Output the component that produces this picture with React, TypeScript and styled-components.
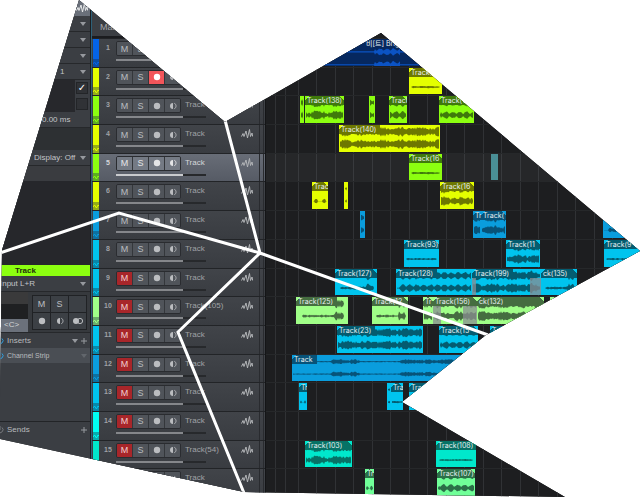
import React from "react";
import styled, { createGlobalStyle, css } from "styled-components";

const GlobalStyle = createGlobalStyle`
  * { box-sizing: border-box; }
  body {
    margin: 0;
    background: #fff;
    font-family: "Liberation Sans", "Noto Sans CJK KR", sans-serif;
    font-size: 8px;
    line-height: 12px;
    color: #b9bbbe;
  }
  button, select, input { font: inherit; color: inherit; margin: 0; padding: 0; border: 0; }
`;

/* ---------- silhouette ---------- */

const STAGE_W = 640;
const STAGE_H = 497;
const LANE_START = 266;
const LANE_W = STAGE_W - LANE_START;

const outline = [
  [79, 0], [225, 122], [381, 33], [640, 251], [486, 335], [402, 402],
  [565, 497], [244, 492], [0, 439], [0, 400], [2, 250],
];
const silhouette = outline
  .map(([x, y]) => `${(x / STAGE_W) * 100}% ${(y / STAGE_H) * 100}%`)
  .join(", ");

const Stage = styled.main`
  position: relative;
  display: flex;
  min-height: 100vh;
  overflow: hidden;
  background: #1d1e20;
  clip-path: polygon(${silhouette});
`;

const Cracks = styled.svg`
  position: absolute;
  inset: 0;
  width: 100%;
  height: 100%;
  pointer-events: none;
`;

/* ---------- inspector ---------- */

const Inspector = styled.aside`
  flex: 0 0 92px;
  display: flex;
  flex-direction: column;
  background: #3b3e43;
  border-right: 1px solid #2d6078;
  box-shadow: inset -1px 0 #1b1d20;
  padding-right: 1px;
`;

const InspectorHead = styled.div`
  display: flex;
  justify-content: flex-end;
  align-items: center;
  height: 16px;
  padding-right: 2px;
  background: #6a707a;
  color: #e8e9ea;
`;

const Field = styled.label<{ $indent?: number; $tone?: string }>`
  display: flex;
  align-items: center;
  height: 16px;
  padding: 0 4px 0 ${(p) => p.$indent ?? 0}px;
  background: ${(p) => p.$tone ?? "#3b3e43"};
  border-bottom: 1px solid #26282b;
  color: #c3c5c8;
`;

const FieldSelect = styled.select`
  flex: 1;
  min-width: 0;
  height: 12px;
  appearance: none;
  background: none;
`;

const CheckRow = styled.label`
  display: flex;
  justify-content: flex-end;
  align-items: center;
  height: 16px;
  padding-right: 2px;
  background: linear-gradient(90deg, #27282c 0 75px, #3b3e43 75px);
`;

const Check = styled.input`
  appearance: none;
  display: grid;
  place-items: center;
  width: 12px;
  height: 12px;
  background: #303236;
  border: 1px solid #232528;
  &:checked::after {
    content: "✓";
    font: bold 10px/10px "DejaVu Sans", sans-serif;
    color: #fff;
  }
`;

const Gap = styled.div<{ $height: number; $tone: string }>`
  height: ${(p) => p.$height}px;
  background: ${(p) => p.$tone};
`;

const ChannelTitle = styled.h2`
  margin: 0;
  height: 11px;
  padding-left: 15px;
  background: #8cff10;
  color: #23300c;
  font-size: 8px;
  line-height: 11px;
`;

const ChannelPanel = styled.div`
  display: flex;
  justify-content: space-between;
  height: 41px;
  border-bottom: 1px solid #26282b;
  padding-right: 3px;
  background: #36393d;
`;

const PanStack = styled.div`
  display: grid;
  grid-template-rows: 12px 15px 13px;
  width: 28px;
  background: linear-gradient(#3a3a3b 12px, #1f2022 12px);
`;

const Pan = styled.output`
  grid-row: 3;
  padding-left: 4px;
  background: #6b717b;
  color: #d4d6d9;
`;

const ButtonGrid = styled.div`
  display: grid;
  grid-template-columns: repeat(3, 17px);
  grid-template-rows: repeat(2, 16px);
  gap: 1px;
  align-self: center;
  padding: 1px;
  background: #202225;
`;

const GridButton = styled.button`
  display: grid;
  place-items: center;
  background: #3c4045;
  color: #bcbec1;
  font-size: 9px;
`;

const Section = styled.div<{ $lit?: boolean }>`
  display: flex;
  align-items: center;
  gap: 3px;
  height: 15px;
  padding-right: 3px;
  background: ${(p) => (p.$lit ? "#4a4e54" : "#3b3e43")};
  font-size: ${(p) => (p.$lit ? 7 : 8)}px;
  svg:first-child { margin-left: -4px; }
  span { flex: 1; white-space: nowrap; }
`;

const Filler = styled.div`
  flex: 1;
`;

/* ---------- track list ---------- */

const Tracks = styled.section`
  flex: 0 0 174px;
  display: flex;
  flex-direction: column;
  background: #3b3e43;
  border-right: 1px solid #141517;
`;

const TracksHead = styled.header`
  height: 38px;
  padding: 21px 0 0 8px;
  border-bottom: 2px solid #1b1c1f;
  color: #a7a9ac;
  font-size: 9px;
`;

const Rows = styled.ol`
  flex: 1;
  display: grid;
  grid-template-rows: repeat(16, 1fr);
  margin: 0;
  padding: 0;
  list-style: none;
`;

const Row = styled.li<{ $selected: boolean }>`
  display: grid;
  grid-template-columns: 8px 16px 65px 1fr 16px 8px;
  grid-template-rows: 18px 1fr;
  min-height: 0;
  border-top: 1px solid #222427;
  background: ${(p) => (p.$selected ? "linear-gradient(#686d77, #565b65)" : "linear-gradient(#414449, #393c41)")};
  color: ${(p) => (p.$selected ? "#d5d7da" : "#a0a2a6")};
`;

const Stripe = styled.div<{ $color: string }>`
  grid-row: 1 / 3;
  display: flex;
  align-items: flex-end;
  margin: 0 1px;
  background: ${(p) => p.$color};
  svg { background: rgba(20, 40, 60, 0.38); color: ${(p) => p.$color}; }
`;

const Num = styled.span`
  align-self: center;
  text-align: center;
  font-size: 7px;
  font-weight: bold;
`;

const Buttons = styled.div`
  align-self: end;
  display: flex;
  height: 15px;
  margin-bottom: 1px;
  border: 1px solid #2a2c30;
  border-radius: 2px;
  overflow: hidden;
`;

const TrackButton = styled.button<{ $tone?: "mute" | "record"; $selected: boolean }>`
  flex: 1;
  display: grid;
  place-items: center;
  min-width: 0;
  background: ${(p) => (p.$selected ? "#747a84" : "#50545a")};
  color: ${(p) => (p.$selected ? "#e4e5e7" : "#bbbdc0")};
  font-size: 9px;
  & + & { border-left: 1px solid #34373b; }
  ${(p) => p.$tone === "mute" && css`background: #a8262a; color: #f0cfcf;`}
  ${(p) => p.$tone === "record" && css`background: #f2555a; color: #fff;`}
`;

const Name = styled.span`
  align-self: center;
  padding-left: 4px;
  white-space: nowrap;
`;

const RowIcon = styled.span`
  align-self: center;
  display: flex;
  color: #b2b4b7;
`;

const Rail = styled.div`
  grid-row: 1 / 3;
  grid-column: 6;
  margin-left: 2px;
  border-left: 1px solid #292b2f;
  &::after {
    content: "";
    display: block;
    width: 3px;
    height: 100%;
    border-right: 1px solid #292b2f;
  }
`;

const Fader = styled.input<{ $selected: boolean }>`
  grid-row: 2;
  grid-column: 3 / 5;
  appearance: none;
  width: 90px;
  height: 2px;
  margin-top: 2px;
  background: linear-gradient(90deg, ${(p) => (p.$selected ? "#c9cbce" : "#85878b")} 75%, #27292c 75%);
  &::-webkit-slider-thumb { appearance: none; width: 0; height: 0; }
`;

/* ---------- arrangement ---------- */

const Arrange = styled.section`
  flex: 1;
  min-width: 0;
  display: flex;
  flex-direction: column;
  background:
    linear-gradient(90deg, transparent 19px, #303235 19px 20px, transparent 20px),
    repeating-linear-gradient(90deg, transparent 0 14px, #303235 14px 15px, transparent 15px 32px, #303235 32px 33px, transparent 33px 37px) 18px 0,
    #1d1e20;
`;

const Ruler = styled.div`
  height: 38px;
  background: #1d1e20;
`;

const Lanes = styled(Rows)``;

const Lane = styled.li<{ $selected: boolean }>`
  position: relative;
  min-height: 0;
  border-top: 1px solid #26282a;
  background: ${(p) => (p.$selected ? "rgba(255, 255, 255, 0.045)" : "none")};
`;

const ClipBox = styled.div<{ $x: number; $w: number; $color: string }>`
  position: absolute;
  top: 0;
  bottom: 1px;
  left: ${(p) => ((p.$x - LANE_START) / LANE_W) * 100}%;
  width: ${(p) => (p.$w / LANE_W) * 100}%;
  overflow: hidden;
  background: ${(p) => p.$color};
`;

const Crossfade = styled(ClipBox)`
  top: 9px;
  opacity: 0.75;
`;

const ClipWave = styled.svg`
  position: absolute;
  inset: 0;
  width: 100%;
  height: 100%;
`;

const ClipLabel = styled.span<{ $shade: string; $tag: boolean; $notch: string }>`
  position: relative;
  display: block;
  width: ${(p) => (p.$tag ? "max-content" : "100%")};
  height: 9px;
  padding: 0 ${(p) => (p.$tag ? 4 : 0)}px 0 2px;
  overflow: hidden;
  white-space: nowrap;
  background:
    linear-gradient(135deg, ${(p) => p.$notch} 3px, transparent 3px),
    linear-gradient(225deg, ${(p) => (p.$tag ? "transparent" : p.$notch)} 3px, transparent 3px),
    ${(p) => p.$shade};
  color: #e9eff0;
  font-family: Inter, "Noto Sans CJK KR", sans-serif;
  font-size: 7px;
  line-height: 9px;
`;

/* ---------- icons ---------- */

const WaveIcon = () => (
  <svg width="12" height="12" viewBox="0 0 12 12" fill="none" stroke="currentColor" strokeWidth="1" strokeLinejoin="round">
    <path d="M.5 8.500L2 5.500l1 3L5 3l1.500 7L8.500 1.500l1 7L11 5l.7 3.500" />
  </svg>
);
const MiniWave = () => (
  <svg width="6" height="8" viewBox="0 0 6 8" fill="none" stroke="currentColor">
    <path d="M0 5l1.500-2L3.500 6 5 3l1 1" />
  </svg>
);
const Dot = () => (
  <svg width="8" height="8" viewBox="0 0 8 8"><circle cx="4" cy="4" r="3.200" fill="currentColor" /></svg>
);
const Monitor = () => (
  <svg width="8" height="8" viewBox="0 0 8 8">
    <path d="M4 1a3 3 0 0 0 0 6z" fill="currentColor" />
    <path d="M5.200 1.200a3 3 0 0 1 0 5.600" fill="none" stroke="currentColor" strokeWidth=".8" />
  </svg>
);
const Stereo = () => (
  <svg width="12" height="8" viewBox="0 0 12 8">
    <circle cx="4" cy="4" r="3" fill="currentColor" />
    <circle cx="8" cy="4" r="2.600" fill="none" stroke="currentColor" />
  </svg>
);
const Arrow = ({ dim = false }: { dim?: boolean }) => (
  <svg width="6" height="4" viewBox="0 0 6 4"><path d="M0 0h6L3 4z" fill={dim ? "#62666c" : "#96999e"} /></svg>
);
const Plus = () => (
  <svg width="6" height="6" viewBox="0 0 6 6"><path d="M3 0v6M0 3h6" stroke="#96999e" /></svg>
);
const Power = ({ on }: { on: boolean }) => (
  <svg width="8" height="8" viewBox="0 0 8 8" fill="none" stroke={on ? "#2f9fe0" : "#77797d"}>
    <path d="M2 1.500a3 3 0 1 0 4 0M4 0v4" />
  </svg>
);

/* ---------- data ---------- */

const BLUE = "#0464e8";
const YELLOW = "#e4ff00";
const GREEN = "#8cff10";
const AZURE = "#0a9ddd";
const CYAN = "#00c4ee";
const MINT = "#a0ff88";
const AQUA = "#00fff4";
const TEAL = "#00e8cc";
const LIME = "#70ff98";

type WaveKind = "full" | "beat" | "thin" | "burst" | "grow" | "spike" | "none";
type Clip = { x: number; w: number; label?: string; wave: WaveKind; color?: string; tag?: boolean };
type Fade = { x: number; w: number };
type Track = { name: string; color: string; muted?: boolean; armed?: boolean; clips: Clip[]; fades?: Fade[] };

const tracks: Track[] = [
  { name: "Track", color: BLUE, clips: [
    { x: 266, w: 98, wave: "none", color: "#06285f" },
    { x: 364, w: 276, label: "비[트] Brig", wave: "burst", color: "#06285f" },
  ] },
  { name: "Track", color: YELLOW, armed: true, clips: [{ x: 409, w: 33, label: "Track(1", wave: "thin" }] },
  { name: "Track", color: GREEN, clips: [
    { x: 300, w: 4, wave: "full" },
    { x: 305, w: 39, label: "Track(138)", wave: "full" },
    { x: 369, w: 6, wave: "beat" },
    { x: 389, w: 18, label: "Track", wave: "beat" },
    { x: 439, w: 35, label: "Track(1", wave: "beat" },
  ] },
  { name: "Track", color: YELLOW, clips: [{ x: 339, w: 101, label: "Track(140)", wave: "full", tag: true }] },
  { name: "Track", color: GREEN, clips: [
    { x: 409, w: 33, label: "Track(16", wave: "thin" },
    { x: 491, w: 7, wave: "none", color: "#4a8f96" },
  ] },
  { name: "Track", color: YELLOW, clips: [
    { x: 312, w: 16, label: "Trac", wave: "spike" },
    { x: 344, w: 4, wave: "spike" },
    { x: 440, w: 34, label: "Track(16", wave: "full" },
  ] },
  { name: "Track", color: AZURE, clips: [
    { x: 360, w: 5, wave: "beat" },
    { x: 473, w: 8, label: "Tr", wave: "full" },
    { x: 481, w: 25, label: "Track(", wave: "full" },
    { x: 603, w: 37, wave: "spike" },
  ] },
  { name: "Track", color: CYAN, clips: [
    { x: 404, w: 35, label: "Track(93)", wave: "thin" },
    { x: 506, w: 34, label: "Track(11", wave: "full" },
    { x: 604, w: 36, label: "Track(9", wave: "thin" },
  ] },
  { name: "Track", color: CYAN, muted: true, clips: [
    { x: 335, w: 42, label: "Track(127)", wave: "grow" },
    { x: 396, w: 76, label: "Track(128)", wave: "beat", tag: true },
    { x: 472, w: 69, label: "Track(199)", wave: "full", tag: true },
    { x: 541, w: 36, label: "ck(135)", wave: "grow" },
  ], fades: [{ x: 472, w: 4 }, { x: 530, w: 11 }] },
  { name: "Track(105)", color: MINT, muted: true, clips: [
    { x: 296, w: 52, label: "Track(125)", wave: "grow", tag: true },
    { x: 372, w: 36, label: "Track(12", wave: "grow" },
    { x: 423, w: 10, label: "Tr", wave: "full" },
    { x: 433, w: 44, label: "Track(156)", wave: "full" },
    { x: 477, w: 67, label: "ck(132)", wave: "full" },
    { x: 550, w: 30, label: "Tr", wave: "full" },
  ], fades: [{ x: 433, w: 8 }, { x: 463, w: 14 }] },
  { name: "Track", color: CYAN, muted: true, clips: [
    { x: 337, w: 86, label: "Track(23)", wave: "full", tag: true },
    { x: 439, w: 39, label: "Track(15", wave: "beat" },
    { x: 490, w: 30, label: "T", wave: "beat" },
  ] },
  { name: "Track", color: AZURE, muted: true, clips: [{ x: 292, w: 348, label: "Track", wave: "burst", tag: true }] },
  { name: "Track", color: CYAN, muted: true, clips: [
    { x: 299, w: 8, label: "Tr", wave: "spike" },
    { x: 387, w: 4, wave: "thin" },
    { x: 391, w: 12, label: "Tra", wave: "thin" },
    { x: 409, w: 31, label: "Track", wave: "thin" },
  ] },
  { name: "Track", color: AQUA, muted: true, clips: [] },
  { name: "Track(54)", color: TEAL, muted: true, clips: [
    { x: 305, w: 47, label: "Track(103)", wave: "full" },
    { x: 436, w: 40, label: "Track(108)", wave: "thin" },
  ] },
  { name: "Track", color: LIME, clips: [
    { x: 365, w: 9, label: "Tr", wave: "spike" },
    { x: 437, w: 38, label: "Track(107)", wave: "beat" },
  ] },
];

const shadeOf: Record<string, string> = {
  [YELLOW]: "#6d7800", [GREEN]: "#3f7a0b", [AZURE]: "#075379", [CYAN]: "#045c70",
  [MINT]: "#456d40", [TEAL]: "#067266", [LIME]: "#2b7048", [BLUE]: "#06285f",
};

const SELECTED = 4;

/* Amplitude envelope for one column of a waveform, t in 0..1. */
function amplitude(kind: WaveKind, i: number, t: number, seed: number): number {
  const noise = Math.abs(Math.sin((i + 1) * 12.9898 + seed * 3.7) * 43758.5453) % 1;
  switch (kind) {
    case "full": return 1.8 + noise * 2.8 + Math.sin(i / 3 + seed) * 0.8;
    case "beat": return t < 0.04 ? 0.4 : 1 + 3.4 * Math.abs(Math.cos(i / 2.2)) * (0.5 + noise * 0.5);
    case "thin": return t < 0.08 || t > 0.92 ? 0 : 0.4 + noise * 0.8;
    case "grow": return t < 0.12 || t > 0.92 ? 0 : 0.5 + noise * 1.2 + (t > 0.74 ? 1.2 + noise * 2 : 0);
    case "spike": return Math.abs(Math.sin(t * Math.PI * 2)) > 0.8 ? 1 + noise * 1.5 : 0.1;
    case "burst": return t > 0.34 || Math.sin(i / 11 + seed) > 0.3 ? 0.8 + noise * 1.8 : 0.3 + noise * 0.4;
    default: return 0;
  }
}

function wavePath(kind: WaveKind, w: number, seed: number, mid: number): string {
  const tops: string[] = [];
  const bottoms: string[] = [];
  for (let i = 1; i < w; i++) {
    const a = amplitude(kind, i, i / w, seed);
    tops.push(`${i} ${(mid - a).toFixed(1)}`);
    bottoms.unshift(`${i} ${(mid + a).toFixed(1)}`);
  }
  return `M${tops.concat(bottoms).join("L")}Z`;
}

function ClipView({ clip, color }: { clip: Clip; color: string }) {
  const master = color === BLUE;
  const shade = shadeOf[color];
  const ink = master ? "#0b53c4" : shade;
  return (
    <ClipBox $x={clip.x} $w={clip.w} $color={clip.color ?? color}>
      <ClipWave viewBox={`0 0 ${clip.w} 28`} preserveAspectRatio="none" aria-hidden="true">
        {master && <path d={`M0 13.500H${clip.w}M0 27H${clip.w}`} stroke={ink} strokeWidth="1.200" />}
        {clip.wave !== "none" && (master
          ? <path d={wavePath("beat", 28, 2, 13.5) + wavePath("beat", 28, 2, 27)} fill={ink} transform="translate(9 0)" />
          : <path d={wavePath(clip.wave, clip.w, clip.x, 7) + wavePath(clip.wave, clip.w, clip.x, 20)} fill={shade} />)}
      </ClipWave>
      {clip.label && (
        <ClipLabel $shade={master ? "transparent" : shade} $tag={!!clip.tag} $notch={master ? "transparent" : clip.color ?? color}>
          {clip.label}
        </ClipLabel>
      )}
    </ClipBox>
  );
}

function TrackRow({ track, index }: { track: Track; index: number }) {
  const selected = index === SELECTED;
  return (
    <Row $selected={selected}>
      <Stripe $color={track.color}><MiniWave /></Stripe>
      <Num>{index + 1}</Num>
      <Buttons>
        <TrackButton $selected={selected} $tone={track.muted ? "mute" : undefined} aria-pressed={!!track.muted}>M</TrackButton>
        <TrackButton $selected={selected}>S</TrackButton>
        <TrackButton $selected={selected} $tone={track.armed ? "record" : undefined} aria-label="Record"><Dot /></TrackButton>
        <TrackButton $selected={selected} aria-label="Monitor"><Monitor /></TrackButton>
      </Buttons>
      <Name>{track.name}</Name>
      <RowIcon><WaveIcon /></RowIcon>
      <Rail />
      <Fader $selected={selected} type="range" defaultValue={75} aria-label={`Volume ${index + 1}`} />
    </Row>
  );
}

function InspectorPane() {
  return (
    <Inspector>
      <InspectorHead><WaveIcon /></InspectorHead>
      {["", "", "", "1"].map((value, i) => (
        <Field key={i} $indent={60}>
          <FieldSelect aria-label={`Option ${i + 1}`}><option>{value}</option></FieldSelect>
          <Arrow />
        </Field>
      ))}
      <CheckRow><Check type="checkbox" defaultChecked aria-label="Follow" /></CheckRow>
      <CheckRow><Check type="checkbox" aria-label="Lock" /></CheckRow>
      <Field as="div" $indent={42}>0.00 ms</Field>
      <Gap $height={22} $tone="#2d3033" />
      <Field $indent={34}>
        <FieldSelect aria-label="Display"><option>Display: Off</option></FieldSelect>
        <Arrow />
      </Field>
      <Gap $height={15} $tone="#3a3c40" />
      <Gap $height={84} $tone="#26272b" />
      <ChannelTitle>Track</ChannelTitle>
      <Field>
        <FieldSelect aria-label="Input"><option>Input L+R</option></FieldSelect>
        <Arrow />
      </Field>
      <ChannelPanel>
        <PanStack><Pan>&lt;C&gt;</Pan></PanStack>
        <ButtonGrid>
          <GridButton>M</GridButton>
          <GridButton>S</GridButton>
          <GridButton aria-label="Empty" />
          <GridButton aria-label="Record"><Dot /></GridButton>
          <GridButton aria-label="Monitor"><Monitor /></GridButton>
          <GridButton aria-label="Stereo"><Stereo /></GridButton>
        </ButtonGrid>
      </ChannelPanel>
      <Section><Power on /><span>Inserts</span><Arrow /><Plus /></Section>
      <Section $lit><Power on /><span>Channel Strip</span><Arrow dim /></Section>
      <Gap $height={58} $tone="#3b3e43" />
      <Gap $height={1} $tone="#222427" />
      <Section><Power on={false} /><span>Sends</span><Plus /></Section>
      <Filler />
    </Inspector>
  );
}

export default function App() {
  return (
    <>
      <GlobalStyle />
      <Stage>
        <InspectorPane />
        <Tracks>
          <TracksHead>Main</TracksHead>
          <Rows>
            {tracks.map((track, i) => <TrackRow key={i} track={track} index={i} />)}
          </Rows>
        </Tracks>
        <Arrange>
          <Ruler />
          <Lanes>
            {tracks.map((track, i) => (
              <Lane key={i} $selected={i === SELECTED}>
                {track.clips.map((clip) => <ClipView key={clip.x} clip={clip} color={track.color} />)}
                {track.fades?.map((fade) => <Crossfade key={fade.x} $x={fade.x} $w={fade.w} $color="#8a8c92" />)}
              </Lane>
            ))}
          </Lanes>
        </Arrange>
        <Cracks viewBox="0 0 640 497" preserveAspectRatio="none" fill="none" stroke="#fff" strokeWidth="3" aria-hidden="true">
          <path d="M0 253L119 213L260 253L488 335M225 120L260 253L178 332L244 493" />
        </Cracks>
      </Stage>
    </>
  );
}
